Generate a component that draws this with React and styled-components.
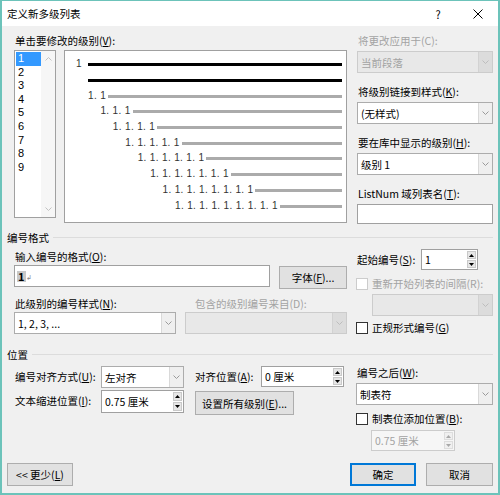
import React from "react";
import styled, { createGlobalStyle } from "styled-components";

const GlobalStyle = createGlobalStyle`
  body {
    margin: 0;
    background: #fff;
  }
  * {
    box-sizing: border-box;
  }
`;

const levels = [1, 2, 3, 4, 5, 6, 7, 8, 9];

const previewRows = [
  { indent: 11, num: "1", slot: 12, heavy: true },
  { indent: 23, num: null, heavy: true },
  ...[2, 3, 4, 5, 6, 7, 8, 9].map((k) => ({
    indent: 23 + (k - 2) * 12.43,
    num: Array(k).fill("1").join(". "),
  })),
];

const Chevron = ({ up, color = "#9a9a9a" }) => (
  <svg width="7" height="4" viewBox="0 0 7 4">
    <path
      d={up ? "M0.5 3.5 L3.5 0.5 L6.5 3.5" : "M0.5 0.5 L3.5 3.5 L6.5 0.5"}
      fill="none"
      stroke={color}
      strokeWidth="1"
    />
  </svg>
);

const Tri = ({ up, color = "#000" }) => (
  <svg width="5" height="3" viewBox="0 0 5 3">
    <path d={up ? "M2.5 0 L5 3 L0 3Z" : "M0 0 L5 0 L2.5 3Z"} fill={color} />
  </svg>
);

const Combo = ({ text, w, disabled }) => (
  <ComboBox $w={w} $disabled={disabled}>
    <ComboText $disabled={disabled}>{text}</ComboText>
    <ComboArrow $disabled={disabled}>
      <Chevron color={disabled ? "#bdbdbd" : "#9a9a9a"} />
    </ComboArrow>
  </ComboBox>
);

const Spin = ({ text, w, h = 21, disabled }) => (
  <SpinBox $w={w} $h={h} $disabled={disabled}>
    <ComboText $disabled={disabled}>{text}</ComboText>
    <SpinButtons>
      <SpinBtn $disabled={disabled}>
        <Tri up color={disabled ? "#a8a8a8" : "#000"} />
      </SpinBtn>
      <SpinBtn $disabled={disabled}>
        <Tri color={disabled ? "#a8a8a8" : "#000"} />
      </SpinBtn>
    </SpinButtons>
  </SpinBox>
);

const App = () => {
  return (
    <>
      <GlobalStyle />
      <Window>
        <TitleBar>
          <TitleText>定义新多级列表</TitleText>
          <TitleButton>?</TitleButton>
          <TitleButton>
            <svg width="10" height="10" viewBox="0 0 10 10">
              <path d="M0.5 0.5 L9.5 9.5 M9.5 0.5 L0.5 9.5" stroke="#000" strokeWidth="1" />
            </svg>
          </TitleButton>
        </TitleBar>

        <Body>
          <TopArea>
            <Column $w={333}>
              <Label>
                单击要修改的级别(<u>V</u>):
              </Label>
              <PickRow>
                <ListBox>
                  <ListItems>
                    {levels.map((n) => (
                      <ListItem key={n} $selected={n === 1}>
                        {n}
                      </ListItem>
                    ))}
                  </ListItems>
                  <ListScroll>
                    <Chevron up color="#c2c2c2" />
                    <Chevron color="#c2c2c2" />
                  </ListScroll>
                </ListBox>
                <Preview>
                  {previewRows.map((r, i) => (
                    <PreviewRow key={i} $indent={r.indent}>
                      {r.num && <Num $slot={r.slot}>{r.num}</Num>}
                      <Bar $heavy={r.heavy} />
                    </PreviewRow>
                  ))}
                </Preview>
              </PickRow>
            </Column>

            <Column $w={136}>
              <Label $disabled>将更改应用于(C):</Label>
              <Gap $h={3} />
              <Combo text="当前段落" disabled />
              <Gap $h={12} />
              <Label>
                将级别链接到样式(<u>K</u>):
              </Label>
              <Gap $h={3} />
              <Combo text="(无样式)" />
              <Gap $h={12} />
              <Label>
                要在库中显示的级别(<u>H</u>):
              </Label>
              <Gap $h={3} />
              <Combo text="级别 1" />
              <Gap $h={12} />
              <Label>
                ListNum 域列表名(<u>T</u>):
              </Label>
              <Gap $h={3} />
              <TextInput $h={20} />
            </Column>
          </TopArea>

          <SectionHead $mt={6}>编号格式</SectionHead>

          <SplitArea $mt={5}>
            <Column $w={333}>
              <Gap $h={1} />
              <Label>
                输入编号的格式(<u>O</u>):
              </Label>
              <Gap $h={1} />
              <InlineRow>
                <TextInput $w={256}>
                  <Highlight>1</Highlight>
                  <ParaMark>↲</ParaMark>
                </TextInput>
                <Button $w={68} $mt={1}>
                  字体(<u>F</u>)...
                </Button>
              </InlineRow>
              <Gap $h={8} />
              <InlineRow>
                <Label $w={162}>
                  此级别的编号样式(<u>N</u>):
                </Label>
                <Label $disabled>包含的级别编号来自(D):</Label>
              </InlineRow>
              <Gap $h={1} />
              <InlineRow>
                <Combo text="1, 2, 3, ..." w={162} />
                <Combo text="" w={162} disabled />
              </InlineRow>
            </Column>

            <Column $w={137}>
              <StartRow>
                <Label $w={65}>
                  起始编号(<u>S</u>):
                </Label>
                <Spin text="1" w={57} />
              </StartRow>
              <Gap $h={7} />
              <CheckRow>
                <CheckBox $disabled />
                <Label $disabled>重新开始列表的间隔(R):</Label>
              </CheckRow>
              <Gap $h={3} />
              <Indented $l={16}>
                <Combo text="" w={121} disabled />
              </Indented>
              <Gap $h={5} />
              <CheckRow>
                <CheckBox />
                <Label>
                  正规形式编号(<u>G</u>)
                </Label>
              </CheckRow>
            </Column>
          </SplitArea>

          <SectionHead $mt={12}>位置</SectionHead>

          <SplitArea $mt={5}>
            <PositionGrid>
              <GridLabel>
                编号对齐方式(<u>U</u>):
              </GridLabel>
              <Combo text="左对齐" w={83} />
              <GridLabel $pl={11}>
                对齐位置(<u>A</u>):
              </GridLabel>
              <Spin text="0 厘米" w={83} />
              <GridLabel>
                文本缩进位置(<u>I</u>):
              </GridLabel>
              <Spin text="0.75 厘米" w={83} h={23} />
              <WideCell>
                <Button $w={99} $h={24} $mt={1}>
                  设置所有级别(<u>E</u>)...
                </Button>
              </WideCell>
            </PositionGrid>

            <Column $w={137}>
              <Label>
                编号之后(<u>W</u>):
              </Label>
              <Gap $h={3} />
              <Combo text="制表符" />
              <Gap $h={7} />
              <CheckRow>
                <CheckBox />
                <Label>
                  制表位添加位置(<u>B</u>):
                </Label>
              </CheckRow>
              <Gap $h={4} />
              <Indented $l={15}>
                <Spin text="0.75 厘米" w={84} disabled />
              </Indented>
            </Column>
          </SplitArea>

          <Footer>
            <Button $w={66}>
              {"<< "}更少(<u>L</u>)
            </Button>
            <ButtonGroup>
              <Button $w={66} $default>
                确定
              </Button>
              <Button $w={67}>取消</Button>
            </ButtonGroup>
          </Footer>
        </Body>
      </Window>
    </>
  );
};

export default App;

const Window = styled.div`
  width: 500px;
  height: 495px;
  border: 2px solid #6cc3ba;
  border-top-width: 1px;
  background: #f0f0f0;
  display: flex;
  flex-direction: column;
  font-family: "Noto Sans CJK SC", "Noto Sans", sans-serif;
  font-size: 10.5px;
  color: #000;
  overflow: hidden;
`;
const TitleBar = styled.div`
  height: 25px;
  background: #fff;
  display: flex;
  align-items: center;
  padding-left: 5px;
`;
const TitleText = styled.div`
  flex: 1;
  font-size: 10.5px;
`;
const TitleButton = styled.div`
  width: 40px;
  height: 25px;
  display: flex;
  align-items: center;
  justify-content: center;
  font-size: 11px;
`;
const Body = styled.div`
  flex: 1;
  display: flex;
  flex-direction: column;
  padding: 0 5px 7px;
`;
const TopArea = styled.div`
  display: flex;
  gap: 10px;
  margin-top: 8px;
  padding-left: 7px;
`;
const SplitArea = styled.div`
  display: flex;
  gap: 9px;
  margin-top: ${(p) => p.$mt}px;
  padding-left: 7px;
`;
const Column = styled.div`
  width: ${(p) => p.$w}px;
  display: flex;
  flex-direction: column;
`;
const Gap = styled.div`
  height: ${(p) => p.$h}px;
  flex-shrink: 0;
`;
const Label = styled.div`
  height: 14px;
  line-height: 14px;
  white-space: nowrap;
  width: ${(p) => (p.$w ? `${p.$w + 9}px` : "auto")};
  color: ${(p) => (p.$disabled ? "#a3a3a3" : "#000")};
  ${(p) => (p.$w ? "flex-shrink: 0;" : "")}
  padding-left: 1px;
  ${(p) => (p.$w === 65 ? "width: 65px;" : "")}
`;
const PickRow = styled.div`
  display: flex;
  align-items: flex-start;
  gap: 8px;
  margin-top: 2px;
`;
const ListBox = styled.div`
  width: 42px;
  height: 168px;
  border: 1px solid #a0a0a0;
  background: #fff;
  display: flex;
`;
const ListItems = styled.div`
  width: 26px;
  padding: 1px 0 0 1px;
`;
const ListItem = styled.div`
  height: 13.6px;
  line-height: 13.6px;
  padding-left: 2px;
  font-family: "Liberation Sans", Arial, sans-serif;
  font-size: 11px;
  color: ${(p) => (p.$selected ? "#fff" : "#000")};
  background: ${(p) => (p.$selected ? "#3399ff" : "transparent")};
`;
const ListScroll = styled.div`
  flex: 1;
  background: #f6f6f6;
  display: flex;
  flex-direction: column;
  align-items: center;
  justify-content: space-between;
  padding: 6px 0 6px;
`;
const Preview = styled.div`
  width: 283px;
  height: 173px;
  border: 1px solid #a0a0a0;
  background: #fff;
  padding: 5px 4px 0 0;
`;
const PreviewRow = styled.div`
  height: 15.7px;
  display: flex;
  align-items: center;
  padding-left: ${(p) => p.$indent}px;
`;
const Num = styled.span`
  font-family: "Liberation Sans", Arial, sans-serif;
  font-size: 10px;
  letter-spacing: 0.34px;
  color: #333;
  white-space: nowrap;
  margin-right: 2px;
  ${(p) => (p.$slot ? `width: ${p.$slot}px; margin-right: 0;` : "")}
`;
const Bar = styled.div`
  flex: 1;
  height: 3px;
  margin-top: 2px;
  background: ${(p) => (p.$heavy ? "#000" : "#ababab")};
`;
const ComboBox = styled.div`
  display: flex;
  width: ${(p) => (p.$w ? `${p.$w}px` : "100%")};
  height: 22px;
  border: 1px solid ${(p) => (p.$disabled ? "#cccccc" : "#acacac")};
  background: ${(p) => (p.$disabled ? "#e8e8e8" : "#fff")};
  flex-shrink: 0;
`;
const ComboText = styled.div`
  flex: 1;
  padding-left: 3px;
  display: flex;
  align-items: center;
  white-space: nowrap;
  color: ${(p) => (p.$disabled ? "#a3a3a3" : "#000")};
`;
const ComboArrow = styled.div`
  width: 14px;
  display: flex;
  align-items: center;
  justify-content: center;
  border-left: 1px solid ${(p) => (p.$disabled ? "#d2d2d2" : "#d9d9d9")};
  background: ${(p) => (p.$disabled ? "#dcdcdc" : "#efefef")};
`;
const TextInput = styled.div`
  width: ${(p) => (p.$w ? `${p.$w}px` : "100%")};
  height: ${(p) => p.$h || 22}px;
  border: 1px solid #a0a0a0;
  background: #fff;
  display: flex;
  align-items: center;
  padding-left: 2px;
  flex-shrink: 0;
`;
const Highlight = styled.span`
  background: #c8c8c8;
  font-size: 11px;
  line-height: 11px;
  padding: 0 1px;
  font-weight: 600;
`;
const ParaMark = styled.span`
  font-size: 7px;
  color: #888;
  margin-top: 2px;
`;
const InlineRow = styled.div`
  display: flex;
  align-items: flex-start;
  gap: 9px;
`;
const Button = styled.div`
  width: ${(p) => p.$w}px;
  height: ${(p) => p.$h || 23}px;
  margin-top: ${(p) => p.$mt || 0}px;
  display: flex;
  align-items: center;
  justify-content: center;
  white-space: nowrap;
  background: #e1e1e1;
  border: 1px solid ${(p) => (p.$default ? "#0078d7" : "#adadad")};
  box-shadow: ${(p) => (p.$default ? "inset 0 0 0 1px #0078d7" : "none")};
  flex-shrink: 0;
`;
const StartRow = styled.div`
  display: flex;
  align-items: center;
`;
const SpinBox = styled.div`
  display: flex;
  width: ${(p) => p.$w}px;
  height: ${(p) => p.$h}px;
  border: 1px solid ${(p) => (p.$disabled ? "#cccccc" : "#a0a0a0")};
  background: ${(p) => (p.$disabled ? "#f6f6f6" : "#fff")};
  flex-shrink: 0;
`;
const SpinButtons = styled.div`
  width: 10px;
  display: flex;
  flex-direction: column;
  gap: 1px;
  padding: 1px 1px 1px 0;
`;
const SpinBtn = styled.div`
  flex: 1;
  display: flex;
  align-items: center;
  justify-content: center;
  background: ${(p) => (p.$disabled ? "#f0f0f0" : "#e6e6e6")};
  border: 1px solid ${(p) => (p.$disabled ? "#dddddd" : "#c9c9c9")};
`;
const CheckRow = styled.div`
  display: flex;
  align-items: center;
  gap: 3px;
  height: 14px;
`;
const CheckBox = styled.div`
  width: 12px;
  height: 12px;
  border: 1px solid ${(p) => (p.$disabled ? "#cccccc" : "#333")};
  background: #fff;
  flex-shrink: 0;
`;
const Indented = styled.div`
  padding-left: ${(p) => p.$l}px;
`;
const SectionHead = styled.div`
  display: flex;
  align-items: center;
  gap: 4px;
  height: 14px;
  margin-top: ${(p) => p.$mt}px;
  white-space: nowrap;
  &::after {
    content: "";
    flex: 1;
    height: 1px;
    background: #dcdcdc;
  }
`;
const PositionGrid = styled.div`
  width: 333px;
  display: grid;
  grid-template-columns: 87px 83px 77px 83px;
  grid-template-rows: 21px 25px;
  row-gap: 3px;
  align-items: start;
`;
const GridLabel = styled.div`
  height: 21px;
  line-height: 21px;
  padding-left: ${(p) => p.$pl || 1}px;
  white-space: nowrap;
`;
const WideCell = styled.div`
  grid-column: 3 / span 2;
  padding-left: 11px;
`;
const Footer = styled.div`
  margin-top: auto;
  display: flex;
  justify-content: space-between;
  align-items: flex-end;
`;
const ButtonGroup = styled.div`
  display: flex;
  gap: 10px;
`;
